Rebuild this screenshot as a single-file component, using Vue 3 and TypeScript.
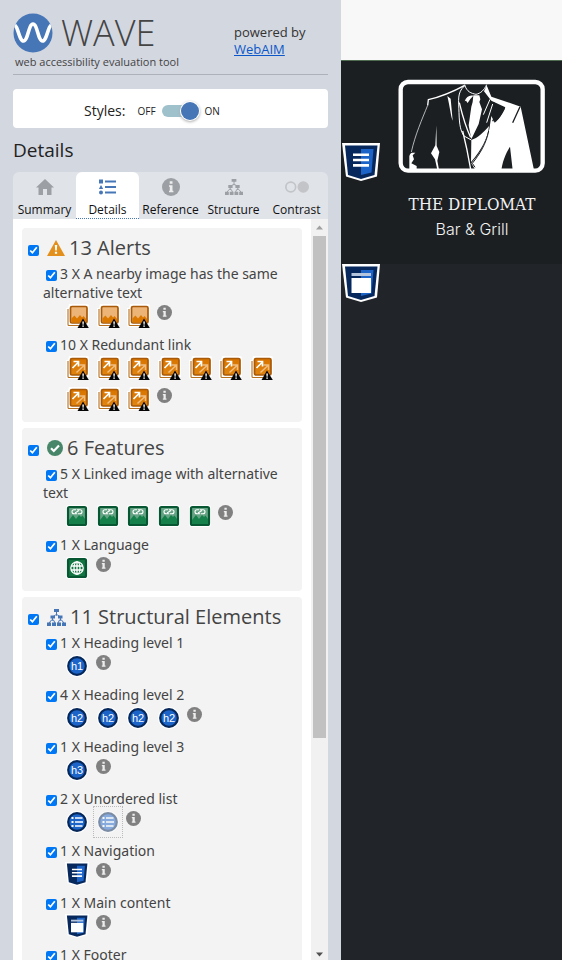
<script setup lang="ts">
import { ref } from 'vue'

interface Item {
  count: number
  label: string
  icon: string
  text?: string
  faded?: number
  checked: boolean
}

interface Group {
  id: string
  title: string
  icon: string
  checked: boolean
  items: Item[]
}

interface Tab {
  id: string
  label: string
}

const tabs: Tab[] = [
  { id: 'summary', label: 'Summary' },
  { id: 'details', label: 'Details' },
  { id: 'reference', label: 'Reference' },
  { id: 'structure', label: 'Structure' },
  { id: 'contrast', label: 'Contrast' },
]

const activeTab = ref('details')
const stylesOn = ref(true)

const groups = ref<Group[]>([
  {
    id: 'alerts',
    title: '13 Alerts',
    icon: 'alert',
    checked: true,
    items: [
      { count: 3, label: 'A nearby image has the same alternative text', icon: 'img-dup', checked: true },
      { count: 10, label: 'Redundant link', icon: 'link-dup', checked: true },
    ],
  },
  {
    id: 'features',
    title: '6 Features',
    icon: 'feature',
    checked: true,
    items: [
      { count: 5, label: 'Linked image with alternative text', icon: 'linked-img', checked: true },
      { count: 1, label: 'Language', icon: 'lang', checked: true },
    ],
  },
  {
    id: 'structural',
    title: '11 Structural Elements',
    icon: 'tree',
    checked: true,
    items: [
      { count: 1, label: 'Heading level 1', icon: 'disc', text: 'h1', checked: true },
      { count: 4, label: 'Heading level 2', icon: 'disc', text: 'h2', checked: true },
      { count: 1, label: 'Heading level 3', icon: 'disc', text: 'h3', checked: true },
      { count: 2, label: 'Unordered list', icon: 'ul', faded: 2, checked: true },
      { count: 1, label: 'Navigation', icon: 'nav', checked: true },
      { count: 1, label: 'Main content', icon: 'main', checked: true },
      { count: 1, label: 'Footer', icon: 'nav', checked: true },
    ],
  },
])
</script>

<template>
  <svg class="sprite" aria-hidden="true">
    <defs>
      <linearGradient id="gOrange" x1="0" y1="0" x2="0" y2="1">
        <stop offset="0" stop-color="#d87400" />
        <stop offset="1" stop-color="#e08410" />
      </linearGradient>
    </defs>

    <symbol id="i-alert" viewBox="0 0 18 16">
      <path d="M9 0 18 16H0Z" fill="#e38f1c" />
      <path d="M7.8 5h2.4l-.4 5.5H8.2ZM7.9 11.7h2.2v2H7.9Z" fill="#fff" />
    </symbol>
    <symbol id="i-feature" viewBox="0 0 16 16">
      <circle cx="8" cy="8" r="8" fill="#478668" />
      <path d="m4 8.2 2.8 2.8L12 5.6" fill="none" stroke="#fff" stroke-width="2.2" />
    </symbol>
    <symbol id="i-tree" viewBox="0 0 19 17">
      <path d="M9.5 2v4.500M5.500 8l3-2h2l3 2M2 14l2.500-3h2L8 14M11 14l1.500-3h2l2.500 3M5.500 8v3.500M13.500 8v3.500" fill="none" stroke="currentColor" />
      <path d="M7 0h5v3H7ZM3.500 6.500h4.500v3H3.500ZM11 6.500h4.500v3H11ZM0 13.500h4V17H0ZM5 13.500h4V17H5ZM10 13.500h4V17h-4ZM15 13.500h4V17h-4Z" fill="currentColor" />
    </symbol>

    <symbol id="i-summary" viewBox="0 0 18 16">
      <path d="M9 0 18 8.500H15.500V16H11V10H7v6H2.500V8.500H0Z" fill="currentColor" />
    </symbol>
    <symbol id="i-details" viewBox="0 0 18 15">
      <path d="M0 0h4v4H0ZM2 5.500 4.200 9.500H-.2ZM6 1h11v2H6ZM6 6.500h11v2H6ZM6 12h11v2H6Z" fill="currentColor" />
      <circle cx="2" cy="13" r="2" fill="currentColor" />
    </symbol>
    <symbol id="i-reference" viewBox="0 0 18 18">
      <circle cx="9" cy="9" r="9" fill="currentColor" />
      <path d="M7.700 3.300h2.800v2.500H7.700ZM7 7.200h3.500v5.500h.9v1.500H7v-1.500h.8V8.700H7Z" fill="#ededee" />
    </symbol>
    <symbol id="i-structure" viewBox="0 0 19 17">
      <use href="#i-tree" />
    </symbol>
    <symbol id="i-contrast" viewBox="0 0 23 12">
      <circle cx="5.500" cy="6" r="4.700" fill="none" stroke="currentColor" stroke-width="1.600" />
      <circle cx="17.500" cy="6" r="5.500" fill="currentColor" />
    </symbol>

    <symbol id="i-warn" viewBox="0 0 24 24">
      <path d="m18 14.500 5.800 9.500H12.500Z" fill="#050505" />
      <path d="M17.300 17.500h1.600l-.3 3.200h-1ZM17.300 21.400h1.600v1.400h-1.600Z" fill="#fff" />
    </symbol>
    <symbol id="i-img-dup" viewBox="0 0 24 24">
      <path d="M4 0h18a2 2 0 0 1 2 2v19H21v2H3a2 2 0 0 1-2-2V4h2Z" fill="#fff" />
      <path d="M3 5v15.500a1 1 0 0 0 1 1H19" fill="none" stroke="#b5701f" stroke-width="1.100" />
      <rect x="5.500" y="2.500" width="16.500" height="16.500" rx="1.500" fill="#ecb577" stroke="#a85a08" stroke-width="1.700" />
      <path d="M6.400 14.500 9.500 11.500l2.500 3 3-3.500 2 2.500 1.500-1.500 2.600 3v3.500H6.400Z" fill="#da7800" />
      <use href="#i-warn" />
    </symbol>
    <symbol id="i-link-dup" viewBox="0 0 24 24">
      <path d="M4 0h18a2 2 0 0 1 2 2v19H21v2H3a2 2 0 0 1-2-2V4h2Z" fill="#fff" />
      <path d="M3 5v15.500a1 1 0 0 0 1 1H19" fill="none" stroke="#b5701f" stroke-width="1.100" />
      <rect x="5.500" y="2.500" width="16.500" height="16.500" rx="1.500" fill="url(#gOrange)" stroke="#a85a08" stroke-width="1.700" />
      <path d="m11.500 16.500 7.500-7M14.500 9H19.500v5" fill="none" stroke="#f0bd80" stroke-width="1.500" />
      <path d="m7.500 12 5.500-5.500M8.500 5.500H13.500V10.500" fill="none" stroke="#fff" stroke-width="1.700" />
      <use href="#i-warn" />
    </symbol>

    <symbol id="i-linked-img" viewBox="0 0 24 24">
      <rect x="1" y="1" width="22" height="22" rx="3" fill="#fff" />
      <rect x="3" y="3" width="18" height="18" rx="1.500" fill="#65a384" stroke="#065732" stroke-width="2.200" />
      <path d="M4 16 8 11l3 4 3-4 2 2 1.500-1.500L20 15v5H4Z" fill="#15804a" />
      <path d="M11 5.700H9a2 2 0 0 0 0 4h3.200M13 9.700h2a2 2 0 0 0 0-4h-3.200M10 8.700c1 0 1.500-.6 2-1s1-1 2-1" fill="none" stroke="#fff" stroke-width="1.100" />
    </symbol>
    <symbol id="i-lang" viewBox="0 0 24 24">
      <rect x="1" y="1" width="22" height="22" rx="3" fill="#fff" />
      <rect x="3" y="3" width="18" height="18" rx="1.500" fill="#127542" stroke="#065732" stroke-width="2.200" />
      <g fill="none" stroke="#fff" stroke-width="1.300">
        <circle cx="12" cy="12" r="6.200" />
        <ellipse cx="12" cy="12" rx="3" ry="6.200" />
        <path d="M12 5.500v13M6 10h12M6 14h12" />
      </g>
    </symbol>

    <symbol id="i-disc" viewBox="0 0 24 24">
      <circle cx="12" cy="12" r="11" fill="#fff" />
      <circle cx="12" cy="12" r="8.800" fill="#1c64c8" stroke="#05275a" stroke-width="2.200" />
    </symbol>
    <symbol id="i-ul" viewBox="0 0 24 24">
      <use href="#i-disc" />
      <path d="M6.500 7h2v2h-2ZM6.500 11h2v2h-2ZM6.500 15h2v2h-2ZM10 7.200h7.500v1.500H10ZM10 11.200h8v1.500h-8ZM10 15.200h7.500v1.500H10Z" fill="#fff" />
    </symbol>
    <symbol id="i-shield" viewBox="0 0 38 38">
      <path d="M0 0h38l-3 33.500L19 38 4 33.500Z" fill="#fff" />
      <path d="M3 2.500h32.500l-3 29.500L19 36 6 32Z" fill="#06285c" />
      <path d="M19 6h12.500l-2 23.500L19 32Z" fill="#1c64c8" />
    </symbol>
    <symbol id="i-nav" viewBox="0 0 38 38">
      <use href="#i-shield" />
      <path d="M11 10.500h16V13H11ZM11 15.700h16v2.500H11ZM11 21h16v2.700H11Z" fill="#fff" />
    </symbol>
    <symbol id="i-main" viewBox="0 0 38 38">
      <use href="#i-shield" />
      <path d="M9.500 9h19.500v3H9.500Z" fill="#b4c4dc" />
      <path d="M9.500 14h19.500v15H9.500Z" fill="#fff" />
    </symbol>
  </svg>

  <div class="page">
    <aside class="sidebar">
      <header class="brand">
        <div class="brand-name">
          <h1 class="logo">
            <svg class="logo-mark" viewBox="0 0 40 40" aria-hidden="true">
              <clipPath id="disc"><circle cx="20" cy="20" r="19.500" /></clipPath>
              <circle cx="20" cy="20" r="19.500" fill="#4776b7" />
              <path d="M1 12C5 12 6 28 10.500 28S15.500 11 20 11s5 17 9.500 17S35 12 39 12" fill="none" stroke="#fff" stroke-width="3.600" clip-path="url(#disc)" />
            </svg>
            <span>WAVE</span>
          </h1>
          <p class="tagline">web accessibility evaluation tool</p>
        </div>
        <p class="powered">powered by<br /><a href="#webaim">WebAIM</a></p>
      </header>

      <div class="styles-box">
        <span class="styles-title">Styles:</span>
        <label class="switch">
          <span>OFF</span>
          <input v-model="stylesOn" type="checkbox" role="switch" aria-label="Styles" />
          <span>ON</span>
        </label>
      </div>

      <h2 class="section-title">Details</h2>

      <nav class="tabs" role="tablist">
        <button
          v-for="tab in tabs"
          :key="tab.id"
          type="button"
          role="tab"
          class="tab"
          :class="[tab.id, { active: tab.id === activeTab }]"
          :aria-selected="tab.id === activeTab"
          @click="activeTab = tab.id"
        >
          <span class="tab-icon"><svg aria-hidden="true"><use :href="'#i-' + tab.id" /></svg></span>
          <span>{{ tab.label }}</span>
        </button>
      </nav>

      <div class="panel">
        <div class="list">
          <section v-for="group in groups" :key="group.id" class="group">
            <h3 class="group-title">
              <input :id="group.id" v-model="group.checked" type="checkbox" />
              <label :for="group.id">
                <svg :class="'mark-' + group.icon" aria-hidden="true"><use :href="'#i-' + group.icon" /></svg>
                <span>{{ group.title }}</span>
              </label>
            </h3>
            <ul class="items">
              <li v-for="(item, i) in group.items" :key="item.label">
                <div class="item-label">
                  <input :id="group.id + i" v-model="item.checked" type="checkbox" />
                  <label :for="group.id + i">{{ item.count }} X {{ item.label }}</label>
                </div>
                <div class="icons">
                  <button
                    v-for="n in item.count"
                    :key="n"
                    type="button"
                    class="icon"
                    :class="{ faded: item.faded === n }"
                    :aria-label="item.label"
                  >
                    <svg viewBox="0 0 24 24" aria-hidden="true">
                      <use :href="'#i-' + item.icon" />
                      <text v-if="item.text" class="glyph" x="12" y="16" text-anchor="middle">{{ item.text }}</text>
                    </svg>
                  </button>
                  <button type="button" class="info" :aria-label="'About ' + item.label">
                    <svg aria-hidden="true"><use href="#i-reference" /></svg>
                  </button>
                </div>
              </li>
            </ul>
          </section>
        </div>
        <div class="scrollbar" aria-hidden="true">
          <svg class="arrow" viewBox="0 0 17 17"><path d="M5 10.500 8.500 6.500l3.500 4Z" fill="#a0a0a0" /></svg>
          <div class="track"><div class="thumb"></div></div>
          <svg class="arrow" viewBox="0 0 17 17"><path d="m5 9.500 3.500 4 3.500-4Z" fill="#505050" /></svg>
        </div>
      </div>
    </aside>

    <main class="site">
      <div class="topbar"></div>
      <div class="masthead">
        <svg class="suit" viewBox="0 0 456 300" role="img" aria-label="Suit and tie">
          <g fill="#fff">
            <path d="M272 28 286 62 374 92 414 282H350L342 212C334 225 322 245 316 282H238L226 262C240 245 262 225 280 160L286 120 296 140C312 130 318 112 328 94L286 74 264 46Z" />
            <path d="M226 192C245 186 262 170 279 150 276 185 255 225 225 258Z" />
            <path d="M232 58h18l3 12-3 8 8 22-10 44-22 46-8-42 8-56 4-14Z" />
            <path d="M206 76c5-14 14-20 26-17l-9 10-8 12-5-7Z" />
            <path d="M154 60l10 8 6 66c-5-10-8-40-16-74ZM121 148l1 62 8 18-6 26 5 27h-5l-7-31-12-18 13-24Z" />
            <path d="M40 240c4-12 8-10 18-10l-8 8 4 12-8 12 16 8v12H40Z" />
          </g>
          <g fill="none" stroke="#fff">
            <path d="M206 28C175 45 135 62 97 71L95 88" stroke-width="4" />
            <path d="M95 88C78 130 58 175 46 228" stroke-width="2" />
            <path d="M205 30C183 50 188 72 189 110S194 165 204 180L226 192" stroke-width="3" />
            <path d="M190 80C202 130 212 160 224 184M200 165C210 205 218 245 224 280" stroke-width="4" />
            <path d="M206 26c6 22 20 26 34 29 14-3 24-12 32-29" stroke-width="3" />
            <path d="M282 70 262 116M290 84 272 140" stroke-width="3" />
          </g>
          <g fill="none" stroke="#1b1f22">
            <path d="M372 92 350 140M294 80l8 30-12 26" stroke-width="4" />
            <path d="M322 95c-8 16-16 28-24 34" stroke-width="12" />
            <path d="M278 165C270 205 250 236 229 262l8 12" stroke-width="3" />
          </g>
          <rect x="14" y="18" width="426" height="266" rx="22" fill="none" stroke="#fff" stroke-width="13" />
        </svg>
        <p class="name">THE DIPLOMAT</p>
        <p class="kind">Bar &amp; Grill</p>
        <button type="button" class="badge" aria-label="Navigation"><svg aria-hidden="true"><use href="#i-nav" /></svg></button>
      </div>
      <div class="content">
        <button type="button" class="badge" aria-label="Main content"><svg aria-hidden="true"><use href="#i-main" /></svg></button>
      </div>
    </main>
  </div>
</template>

<style>
body {
  overflow: hidden;
}
</style>

<style scoped>
* {
  box-sizing: border-box;
}

h1,
h2,
h3,
p,
ul {
  margin: 0;
  padding: 0;
  font-weight: 400;
}

button {
  margin: 0;
  padding: 0;
  border: 0;
  background: none;
  font: inherit;
  color: inherit;
}

svg {
  display: block;
}

.sprite {
  position: absolute;
  width: 0;
  height: 0;
}

.page {
  display: flex;
  height: 100vh;
  overflow: hidden;
  font-family: 'Open Sans', sans-serif;
  color: #222;
}

.sidebar {
  display: flex;
  flex: 0 0 341px;
  flex-direction: column;
  min-height: 0;
  padding: 12px 13px 0;
  background: #d3d7e0;
}

.brand {
  display: flex;
  justify-content: space-between;
  height: 63px;
  border-bottom: 1px solid #adb2ba;
}

.logo {
  display: flex;
  align-items: center;
  gap: 8px;
  height: 42px;
  font-size: 36px;
  font-weight: 300;
  line-height: 42px;
  color: #444;
}

.logo-mark {
  width: 40px;
  height: 40px;
}

.tagline {
  padding-left: 2px;
  font-size: 11px;
  line-height: 16px;
  color: #444;
}

.powered {
  width: 94px;
  padding-top: 12px;
  font-size: 13px;
  line-height: 17px;
  color: #333;
}

.powered a {
  color: #0b57c9;
}

.styles-box {
  display: flex;
  align-items: center;
  gap: 12px;
  height: 39px;
  margin-top: 14px;
  padding-left: 71px;
  padding-top: 4px;
  border-radius: 4px;
  background: #fff;
}

.styles-title {
  font-size: 14px;
}

.switch {
  display: flex;
  align-items: center;
  gap: 6px;
  font-size: 10px;
}

.switch input {
  display: flex;
  align-items: center;
  width: 37px;
  height: 12px;
  margin: 0;
  appearance: none;
  border-radius: 6px;
  background: #9fc1cb;
}

.switch input::before {
  content: '';
  width: 18px;
  height: 18px;
  border-radius: 50%;
  background: #4776b7;
  box-shadow: 0 0 0 1px #fff, 0 1px 3px 1px #aaa;
}

.switch input:checked {
  justify-content: flex-end;
}

.section-title {
  margin-top: 8px;
  font-size: 19px;
  line-height: 28px;
}

.tabs {
  display: flex;
  flex: none;
  height: 47px;
  margin-top: 8px;
  border-radius: 6px 6px 0 0;
  background: #e0e3e8;
}

.tab {
  display: flex;
  flex: 1 1 0;
  flex-direction: column;
  align-items: center;
  min-width: 0;
  border-radius: 6px 6px 0 0;
  font-size: 12px;
  line-height: 16px;
  color: #111;
}

.tab.active {
  border-bottom: 1px dotted #4776b7;
  background: #fff;
}

.tab-icon {
  display: flex;
  align-items: center;
  height: 30px;
  color: #9c9fa3;
}

.tab.active .tab-icon {
  color: #4776b7;
}

.tab-icon svg {
  width: 18px;
  height: 18px;
}

.contrast .tab-icon svg {
  width: 24px;
  color: #c2c4c7;
}

.panel {
  display: flex;
  flex: 1 1 0;
  min-height: 0;
  background: #fff;
}

.list {
  display: flex;
  flex: 1 1 0;
  flex-direction: column;
  gap: 6px;
  min-width: 0;
  padding: 9px 9px 0;
  overflow: hidden;
}

.group {
  flex: none;
  padding: 4px 0;
  border-radius: 4px;
  background: #f3f3f3;
}

input[type='checkbox'] {
  accent-color: #0078f5;
}

.group-title {
  display: flex;
  align-items: center;
  gap: 8px;
  height: 32px;
  padding-left: 6px;
  font-size: 20px;
  line-height: 32px;
  color: #444;
}

.group-title input {
  width: 11px;
  height: 11px;
  margin: 4px 0 0;
}

.group-title label {
  display: flex;
  align-items: center;
  gap: 4px;
}

.mark-alert {
  width: 18px;
  height: 16px;
}

.mark-feature {
  width: 16px;
  height: 16px;
}

.mark-tree {
  width: 19px;
  height: 17px;
  color: #4776b7;
}

.items {
  padding-left: 21px;
  list-style: none;
  font-family: 'Noto Sans', 'Open Sans', sans-serif;
  font-size: 14px;
  line-height: 19px;
  color: #444;
}

.items li {
  margin-bottom: 5px;
}

.item-label input {
  width: 11px;
  height: 11px;
  margin: 0 3px;
  vertical-align: -2px;
}

.icons {
  display: grid;
  grid-template-columns: repeat(7, 1fr);
  grid-auto-rows: 28px;
  row-gap: 3px;
  max-width: 233px;
  padding-left: 19px;
}

.icon {
  display: grid;
  place-items: center;
}

.icon svg {
  width: 24px;
  height: 24px;
}

.glyph {
  font-family: 'Liberation Sans', sans-serif;
  font-size: 11px;
  fill: #fff;
}

.icon.faded {
  margin: -2px 0;
  border: 1px dotted #bbb;
}

.icon.faded svg {
  opacity: 0.5;
}

.info {
  align-self: start;
  justify-self: start;
  margin: 3px 0 0 3px;
  color: #808080;
}

.info svg {
  width: 15px;
  height: 15px;
}

.scrollbar {
  display: flex;
  flex: 0 0 17px;
  flex-direction: column;
  background: #f1f1f1;
}

.arrow {
  width: 17px;
  height: 17px;
}

.track {
  flex: 1;
  padding: 0 2px;
}

.thumb {
  height: 71%;
  background: #c1c1c1;
}

.site {
  display: flex;
  flex: 1 1 0;
  flex-direction: column;
  min-width: 0;
  background: #212429;
}

.topbar {
  height: 61px;
  border-bottom: 1px solid #4f6b50;
  background: #f8f8f8;
}

.masthead {
  position: relative;
  display: flex;
  flex-direction: column;
  align-items: center;
  height: 203px;
  padding: 15px 0 0 41px;
  background: #1b1f22;
  color: #f2f2f2;
}

.suit {
  width: 152px;
  height: 100px;
}

.name {
  margin-top: 16px;
  font-family: 'DejaVu Serif Condensed', 'DejaVu Serif', serif;
  font-size: 17px;
  line-height: 24px;
  white-space: nowrap;
}

.kind {
  margin-top: 1px;
  font-family: Inter, sans-serif;
  font-size: 16px;
  font-weight: 300;
  line-height: 24px;
}

.content {
  position: relative;
  flex: 1;
}

.badge {
  position: absolute;
  top: 0;
  left: 1px;
}

.masthead .badge {
  top: 82px;
}

.badge svg {
  width: 38px;
  height: 38px;
}
</style>
